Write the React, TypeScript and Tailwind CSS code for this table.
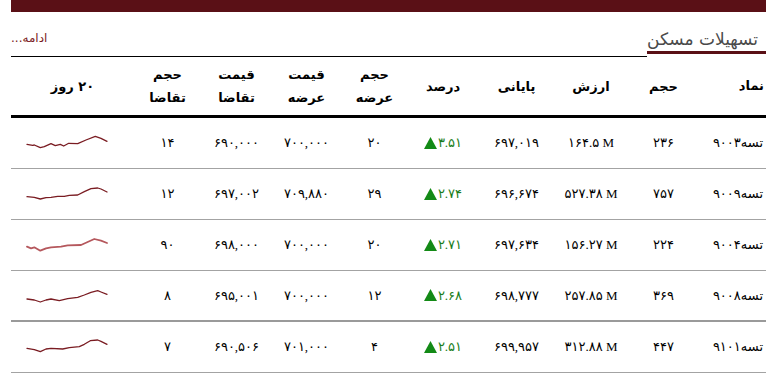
import React from "react";

type Row = {
  sym: string;
  vol: string;
  val: string;
  last: string;
  pct: string;
  offVol: string;
  offPrice: string;
  bidPrice: string;
  bidVol: string;
  spark: number[][];
  light?: boolean;
};

const rows: Row[] = [
  {
    sym: "تسه۹۰۰۳", vol: "۲۳۶", val: "۱۶۴.۵ M", last: "۶۹۷,۰۱۹", pct: "۳.۵۱", offVol: "۲۰", offPrice: "۷۰۰,۰۰۰", bidPrice: "۶۹۰,۰۰۰", bidVol: "۱۴",
    spark: [[0, 8.3], [5.7, 9.3], [7.3, 9], [13.3, 11.7], [17.3, 10.7], [24, 7.7], [28.3, 9.7], [33.3, 8.3], [36.7, 10], [41.7, 7.3], [50.7, 7.7], [59, 4], [68.3, 0.3], [74, 2.3], [80, 5.3]],
  },
  {
    sym: "تسه۹۰۰۹", vol: "۷۵۷", val: "۵۲۷.۳۸ M", last: "۶۹۶,۶۷۴", pct: "۲.۷۴", offVol: "۲۹", offPrice: "۷۰۹,۸۸۰", bidPrice: "۶۹۷,۰۰۲", bidVol: "۱۲",
    spark: [[0, 9.7], [7.3, 10.3], [13.3, 12], [19, 10.7], [24, 10.3], [30.7, 9.3], [37.3, 9.3], [42.3, 8.3], [50.7, 8], [57.3, 4.7], [64, 1.7], [70.7, 1], [74, 2], [80, 5]],
  },
  {
    sym: "تسه۹۰۰۴", vol: "۲۲۴", val: "۱۵۶.۲۷ M", last: "۶۹۷,۶۳۴", pct: "۲.۷۱", offVol: "۲۰", offPrice: "۷۰۰,۰۰۰", bidPrice: "۶۹۸,۰۰۰", bidVol: "۹۰",
    spark: [[0, 8.7], [4, 10.3], [7.3, 9.3], [13.3, 12.7], [19, 10.3], [24, 9.3], [34, 8.7], [40.7, 7.3], [54, 7], [59, 4.7], [67.3, 1], [74, 2.7], [80, 5]],
    light: true,
  },
  {
    sym: "تسه۹۰۰۸", vol: "۳۶۹", val: "۲۵۷.۸۵ M", last: "۶۹۸,۷۷۷", pct: "۲.۶۸", offVol: "۱۲", offPrice: "۷۰۰,۰۰۰", bidPrice: "۶۹۵,۰۰۱", bidVol: "۸",
    spark: [[0, 10], [7.3, 11], [13.3, 13], [19, 11], [24, 10], [32.3, 11.7], [40.7, 9.7], [50.7, 8.3], [57.3, 6], [64, 3.3], [70.7, 1.7], [74, 3], [80, 5.3]],
  },
  {
    sym: "تسه۹۱۰۱", vol: "۴۴۷", val: "۳۱۲.۸۸ M", last: "۶۹۹,۹۵۷", pct: "۲.۵۱", offVol: "۴", offPrice: "۷۰۱,۰۰۰", bidPrice: "۶۹۰,۵۰۶", bidVol: "۷",
    spark: [[0, 8.3], [7.3, 9.7], [13.3, 11.7], [19, 9], [24, 8.3], [35.7, 9], [42.3, 7.7], [52.3, 6.7], [57.3, 4.3], [63.3, 0.7], [70.7, 0], [74, 1.3], [80, 4.3]],
  },
];

const grid =
  "grid grid-cols-[66px_73px_72px_77px_70px_67px_69px_71px_67px_123px]";

const headFont = { fontFamily: "Tahoma, 'DejaVu Sans', sans-serif" };
const dataFont = { fontFamily: "'Liberation Serif', 'DejaVu Sans', serif" };

function Spark({ pts, light }: { pts: number[][]; light?: boolean }) {
  const d = pts.map((p) => `${p[0] + 1},${p[1] + 1}`).join(" ");
  return (
    <svg width="82" height="16" viewBox="0 0 82 16">
      <polyline
        points={d}
        fill="none"
        stroke={light ? "#b5585d" : "#7a1c22"}
        strokeWidth={light ? 1.8 : 1.3}
        strokeLinejoin="round"
        strokeLinecap="round"
      />
    </svg>
  );
}

function Up() {
  return (
    <svg width="13" height="12" viewBox="0 0 13 12" className="mr-[1px] mb-[1px]">
      <polygon points="6.5,0 13,12 0,12" fill="#138a16" />
    </svg>
  );
}

function Head({ l1, l2 }: { l1: string; l2?: string }) {
  return (
    <div className="flex flex-col items-center justify-center text-[13px] font-bold text-black leading-[23px]">
      <span>{l1}</span>
      {l2 && <span>{l2}</span>}
    </div>
  );
}

export default function App() {
  return (
    <div className="w-[774px] h-[384px] bg-white overflow-hidden">
      <div className="mx-[11px] w-[755px]">
        <div className="h-[12px] bg-[#5a1016]" />
        <div dir="rtl" className="flex items-start h-[45px]">
          <div className="w-[119px] h-[42px] border-b-[3px] border-[#5a1016] flex items-end justify-end pb-[1px]">
            <span className="text-[17px] text-[#4a4a4a] pr-[1px] leading-[22px]" style={headFont}>
              تسهیلات مسکن
            </span>
          </div>
          <div className="flex-1 h-[45px] border-b border-black flex items-start justify-end pt-[17px]">
            <span className="text-[12px] text-[#7a1a22]" style={headFont}>
              ادامه...
            </span>
          </div>
        </div>
        <div dir="rtl" style={headFont}>
          <div className={`${grid} h-[61px] border-b-[3px] border-black`}>
            <div className="flex items-center justify-start pr-[2px] text-[13px] font-bold">نماد</div>
            <Head l1="حجم" />
            <Head l1="ارزش" />
            <Head l1="پایانی" />
            <Head l1="درصد" />
            <Head l1="حجم" l2="عرضه" />
            <Head l1="قیمت" l2="عرضه" />
            <Head l1="قیمت" l2="تقاضا" />
            <Head l1="حجم" l2="تقاضا" />
            <Head l1="۲۰ روز" />
          </div>
          {rows.map((r, i) => (
            <div
              key={i}
              className={`${grid} h-[51px] ${i === 3 ? "border-b-2 border-[#9a9a9a]" : "border-b border-[#a3a3a3]"} text-[13px] text-black`}
            >
              <div className="flex items-center justify-start pr-[3px]">{r.sym}</div>
              <div className="flex items-center justify-center" style={dataFont}>{r.vol}</div>
              <div className="flex items-center justify-center" dir="ltr" style={dataFont}>{r.val}</div>
              <div className="flex items-center justify-center" dir="ltr" style={dataFont}>{r.last}</div>
              <div className="flex items-center justify-center text-[#1a7d1a]" dir="ltr" style={dataFont}>
                <Up />
                <span>{r.pct}</span>
              </div>
              <div className="flex items-center justify-center" dir="ltr" style={dataFont}>{r.offVol}</div>
              <div className="flex items-center justify-center" dir="ltr" style={dataFont}>{r.offPrice}</div>
              <div className="flex items-center justify-center" dir="ltr" style={dataFont}>{r.bidPrice}</div>
              <div className="flex items-center justify-center" dir="ltr" style={dataFont}>{r.bidVol}</div>
              <div className="flex items-center justify-start pl-[15px]" dir="ltr">
                <Spark pts={r.spark} light={r.light} />
              </div>
            </div>
          ))}
        </div>
      </div>
    </div>
  );
}
